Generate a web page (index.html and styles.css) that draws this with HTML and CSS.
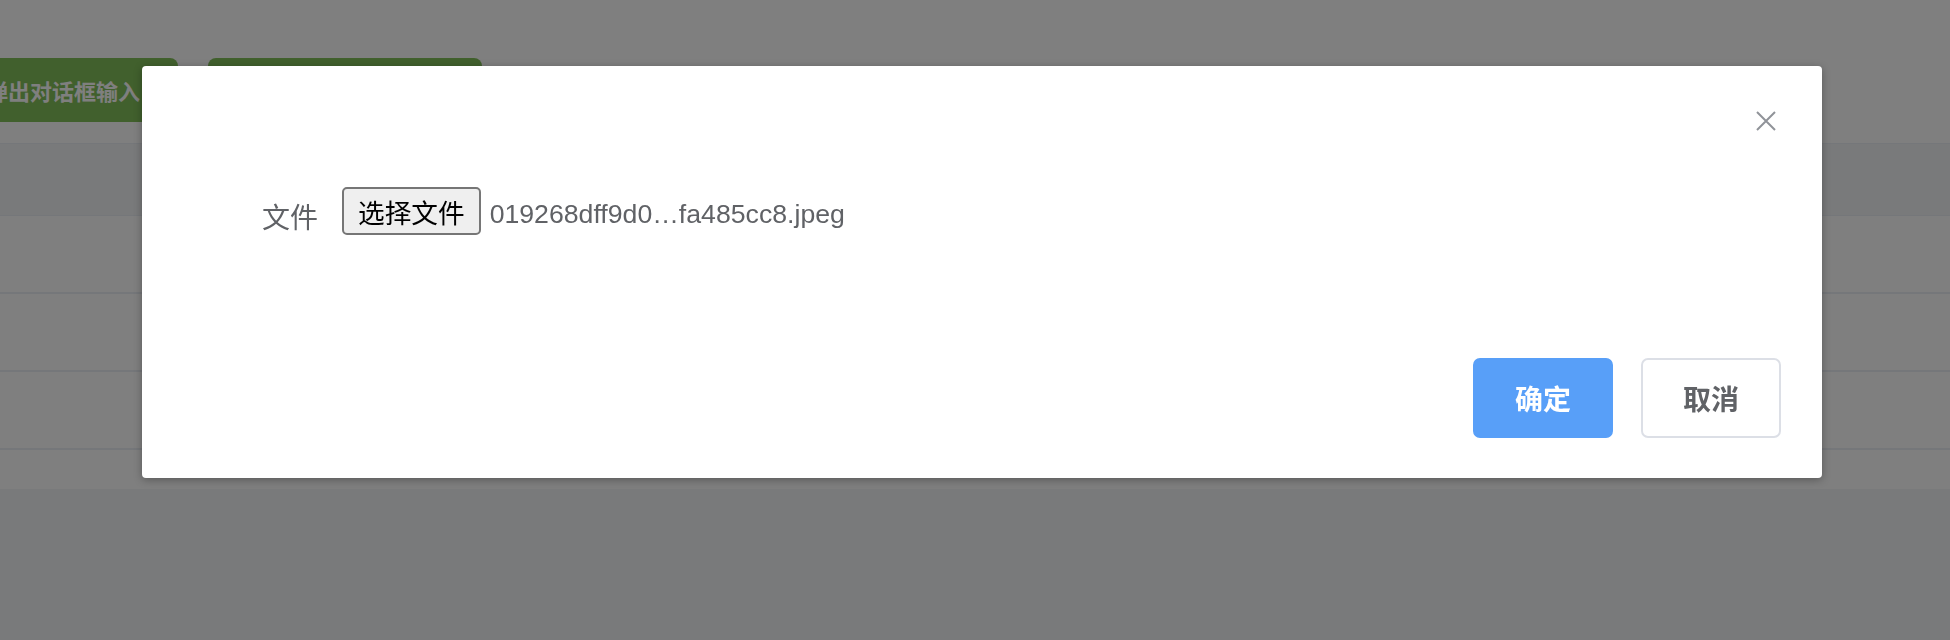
FILE: index.html
```html
<!DOCTYPE html>
<html lang="zh-CN">
<head>
<meta charset="utf-8">
<title>上传文件</title>
<link rel="stylesheet" href="styles.css">
</head>
<body>
<div class="page">
  <div class="toolbar">
    <button class="green-btn">弹出对话框输入</button>
    <button class="green-btn">弹出对话框上传文件</button>
  </div>
  <div class="table">
    <div class="thead"></div>
    <div class="trow"></div>
    <div class="trow"></div>
    <div class="trow"></div>
    <div class="trow last"></div>
  </div>
</div>

<div class="overlay"></div>

<div class="dialog">
  <div class="dialog-header">
    <button class="close-btn" aria-label="关闭">
      <svg width="32" height="32" viewBox="0 0 32 32"><path d="M7 7 L25 25 M25 7 L7 25" stroke="#909399" stroke-width="2" fill="none"/></svg>
    </button>
  </div>
  <div class="dialog-body">
    <div class="form-row">
      <label class="form-label">文件</label>
      <div class="file-control">
        <button class="file-btn">选择文件</button>
        <span class="file-name">019268dff9d0…fa485cc8.jpeg</span>
      </div>
    </div>
  </div>
  <div class="dialog-footer">
    <button class="btn btn-primary">确定</button>
    <button class="btn btn-default">取消</button>
  </div>
</div>
</body>
</html>
```

FILE: styles.css
```css
* { box-sizing: border-box; }

html, body {
  margin: 0;
  height: 100%;
}

body {
  background: #f3f4f6;
  font-family: "Liberation Sans", "Noto Sans CJK SC", sans-serif;
  overflow: hidden;
}

.page {
  background: #ffffff;
  padding-top: 58px;
}

.toolbar {
  display: flex;
  gap: 30px;
  margin-left: -52px;
  height: 64px;
}

.green-btn {
  height: 64px;
  padding: 0 38px;
  border: none;
  border-radius: 8px;
  background: #82c05a;
  color: #ffffff;
  font-family: "Liberation Sans", "Noto Sans CJK SC", sans-serif;
  font-size: 22px;
  font-weight: 700;
  white-space: nowrap;
}

.table {
  margin-top: 21px;
  border-top: 1px solid #ebeef5;
}

.thead {
  height: 72px;
  background: #f3f4f6;
  border-bottom: 1px solid #ebeef5;
}

.trow {
  height: 78px;
  border-bottom: 2px solid #ebeef5;
}

.trow.last {
  height: 39px;
  border-bottom: none;
}

.overlay {
  position: fixed;
  inset: 0;
  background: rgba(0, 0, 0, 0.5);
}

.dialog {
  position: absolute;
  left: 142px;
  top: 66px;
  width: 1680px;
  background: #ffffff;
  border-radius: 4px;
  box-shadow: 0 2px 8px rgba(0, 0, 0, 0.3);
}

.dialog-header {
  position: relative;
  height: 60px;
}

.close-btn {
  position: absolute;
  top: 39px;
  right: 40px;
  width: 32px;
  height: 32px;
  padding: 0;
  border: none;
  background: transparent;
  display: flex;
}

.dialog-body {
  padding: 61px 40px 103px;
}

.form-row {
  display: flex;
  align-items: flex-start;
  height: 48px;
}

.form-label {
  width: 160px;
  padding-right: 24px;
  padding-top: 8px;
  text-align: right;
  line-height: 48px;
  font-size: 28px;
  color: #606266;
}

.file-control {
  display: flex;
  align-items: baseline;
}

.file-btn {
  height: 48px;
  padding: 0 14px;
  border: 2px solid #767676;
  border-radius: 5px;
  background: #efefef;
  color: #000000;
  font-family: "Liberation Sans", "Noto Sans CJK SC", sans-serif;
  font-size: 26.67px;
}

.file-name {
  margin-left: 9px;
  font-size: 26.67px;
  color: #606266;
  white-space: nowrap;
}

.dialog-footer {
  display: flex;
  justify-content: flex-end;
  gap: 28px;
  padding: 20px 41px 40px;
}

.btn {
  width: 140px;
  height: 80px;
  border-radius: 7px;
  font-family: "Liberation Sans", "Noto Sans CJK SC", sans-serif;
  font-size: 28px;
  font-weight: 700;
}

.btn-primary {
  background: #589ff8;
  border: 2px solid #589ff8;
  color: #ffffff;
}

.btn-default {
  background: #ffffff;
  border: 2px solid #dcdfe6;
  color: #606266;
}
```
